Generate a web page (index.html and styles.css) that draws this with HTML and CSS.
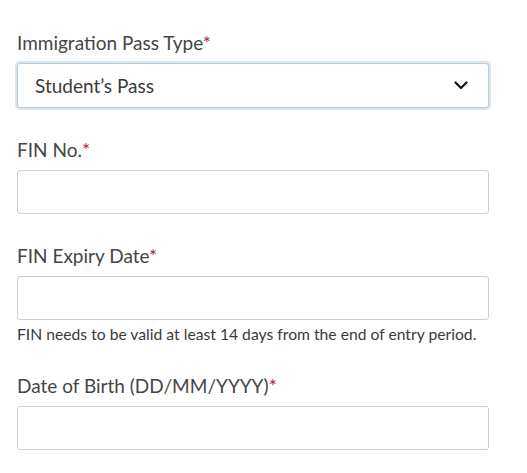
FILE: index.html
```html
<!DOCTYPE html>
<html lang="en">
<head>
<meta charset="utf-8">
<link rel="stylesheet" href="styles.css">
</head>
<body>
<form class="form">
  <div class="field">
    <label class="label">Immigration Pass Type<span class="req">*</span></label>
    <div class="select">
      <span class="select-value">Student’s Pass</span>
      <svg class="chevron" width="14" height="9" viewBox="0 0 14 9"><path d="M1.5 1.5 L7 7 L12.5 1.5" fill="none" stroke="#111" stroke-width="2.2" stroke-linecap="round" stroke-linejoin="round"/></svg>
    </div>
  </div>
  <div class="field">
    <label class="label">FIN No.<span class="req">*</span></label>
    <input class="input" type="text">
  </div>
  <div class="field">
    <label class="label">FIN Expiry Date<span class="req">*</span></label>
    <input class="input" type="text">
    <p class="help">FIN needs to be valid at least 14 days from the end of entry period.</p>
  </div>
  <div class="field">
    <label class="label">Date of Birth (DD/MM/YYYY)<span class="req">*</span></label>
    <input class="input" type="text">
  </div>
</form>
</body>
</html>
```
FILE: styles.css
```css
html, body {
  margin: 0;
  padding: 0;
  background: #fff;
}
body {
  font-family: Lato, "Open Sans", sans-serif;
  color: #3d3d3d;
}
.form {
  padding: 31px 0 0 17px;
  width: 472px;
}
.field {
  display: flex;
  flex-direction: column;
  margin-bottom: 30px;
}
.label {
  display: block;
  font-size: 19px;
  line-height: 24px;
  margin-bottom: 8px;
  color: #454545;
}
.req {
  color: #a8253a;
}
.select {
  box-sizing: border-box;
  height: 45px;
  display: flex;
  align-items: center;
  justify-content: space-between;
  padding: 0 20px 0 17px;
  border: 1px solid #b9c9d6;
  border-radius: 3px;
  box-shadow: 0 0 0 2px #dbe5ec;
  background: #fff;
}
.select-value {
  font-size: 19px;
  color: #3a3a3a;
}
.chevron {
  display: block;
}
.input {
  box-sizing: border-box;
  height: 44px;
  width: 100%;
  margin: 0;
  border: 1px solid #cfcfcf;
  border-radius: 3px;
  background: #fff;
  font: inherit;
}
.help {
  margin: 4px 0 0;
  font-size: 15.7px;
  line-height: 20px;
  color: #3a3a3a;
}
```
